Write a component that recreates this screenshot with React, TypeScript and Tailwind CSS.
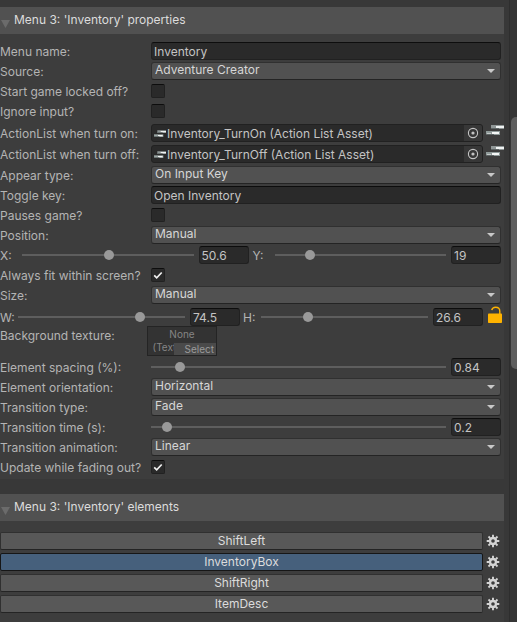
import { useId, type ReactNode } from 'react'

const FIELD =
  'h-[18px] min-w-0 rounded-[3px] border border-[#212121] border-t-[#0d0d0d] bg-[#2a2a2a] px-[2px] pt-px text-[#c4c4c4] outline-none focus:border-[#3a79bb]'

const ELEMENTS = ['ShiftLeft', 'InventoryBox', 'ShiftRight', 'ItemDesc']

function ActionListIcon({ className }: { className?: string }) {
  return (
    <svg viewBox="0 0 18 11" className={className} aria-hidden="true">
      <path d="M5 0h13v4H5z" fill="#8f9696" />
      <path d="M10 1h8v2h-8z" fill="#f0f3f3" />
      <path d="M5 3h8v1H5z" fill="#5d6464" />
      <path d="M0 6h14v4H0z" fill="#8f9a99" />
      <path d="M6 7h7v2H6z" fill="#f4f6f6" />
      <path d="M1 8h4v1H1z" fill="#c4c9c9" />
      <path d="M0 9h8v1H0z" fill="#5d6464" />
    </svg>
  )
}

function GearIcon() {
  return (
    <svg viewBox="0 0 14 14" className="size-[14px]" fill="none" stroke="#d4d4d4" aria-hidden="true">
      <circle cx="7" cy="7" r="3" strokeWidth="2.400" />
      <path
        d="M7 0.700v2.500M7 10.800v2.500M0.700 7h2.500M10.800 7h2.500M2.500 2.500l1.800 1.800M9.700 9.700l1.800 1.800M11.500 2.500L9.700 4.300M4.300 9.700l-1.800 1.800"
        strokeWidth="1.900"
      />
    </svg>
  )
}

function LockIcon() {
  return (
    <svg viewBox="0 0 14 17" className="h-[17px] w-[14px]" aria-hidden="true">
      <path d="M3.700 4.200C4.200 2.200 5.600 1.200 7.600 1.200c2.600 0 4.200 1.600 4.200 4V8" fill="none" stroke="#ffb300" strokeWidth="1.400" />
      <rect x="0" y="7.500" width="14" height="9.500" rx="0.800" fill="#ffb300" />
    </svg>
  )
}

function Header({ title }: { title: string }) {
  return (
    <button type="button" aria-expanded="true" className="flex h-[27px] w-full items-center bg-[#515151] pb-px text-left text-[#dcdcdc]">
      <span className="w-[14px] pt-[8px] pl-px">
        <svg viewBox="0 0 9 8" className="h-[8px] w-[9px]" aria-hidden="true">
          <path d="M0 0h9L4.500 8z" fill="#6b6b6b" />
        </svg>
      </span>
      {title}
    </button>
  )
}

function Row({ label, children }: { label: string; children: (id: string) => ReactNode }) {
  const id = useId()
  return (
    <div className="flex h-[18px] items-center">
      <label htmlFor={id} className="w-[151px] shrink-0 pt-px whitespace-nowrap">{label}</label>
      {children(id)}
    </div>
  )
}

function TextRow({ label, value }: { label: string; value: string }) {
  return <Row label={label}>{(id) => <input id={id} type="text" defaultValue={value} className={`${FIELD} flex-1`} />}</Row>
}

function SelectRow({ label, value }: { label: string; value: string }) {
  return (
    <Row label={label}>
      {(id) => (
        <div className="relative flex-1">
          <select
            id={id}
            className="block h-[18px] w-full appearance-none rounded-[3px] border border-[#303030] border-b-[#242424] bg-[#515151] px-[3px] pb-[2px] leading-[14px] text-[#d6d6d6] outline-none"
          >
            <option>{value}</option>
          </select>
          <svg viewBox="0 0 8 4" className="pointer-events-none absolute top-[7px] right-[6px] h-[4px] w-[8px]" aria-hidden="true">
            <path d="M0 0h8L4 4z" fill="#c8c8c8" />
          </svg>
        </div>
      )}
    </Row>
  )
}

function CheckRow({ label, checked = false }: { label: string; checked?: boolean }) {
  return (
    <Row label={label}>
      {(id) => (
        <span className="relative size-[14px]">
          <input
            id={id}
            type="checkbox"
            defaultChecked={checked}
            className="peer block size-[14px] appearance-none rounded-[2px] border border-[#212121] border-t-[#0d0d0d] bg-[#2a2a2a]"
          />
          <svg viewBox="0 0 14 14" className="pointer-events-none absolute inset-0 hidden size-[14px] peer-checked:block" aria-hidden="true">
            <path d="M3.200 7.300l2.500 2.500 5-5.300" fill="none" stroke="#f0f0f0" strokeWidth="1.700" />
          </svg>
        </span>
      )}
    </Row>
  )
}

function SliderField({ id, name, value, max }: { id: string; name: string; value: number; max: number }) {
  return (
    <>
      <input
        id={id}
        type="range"
        min={0}
        max={max}
        step={0.01}
        defaultValue={value}
        className="h-[10px] min-w-0 flex-1 appearance-none bg-transparent [&::-webkit-slider-runnable-track]:h-[2px] [&::-webkit-slider-runnable-track]:bg-[#5e5e5e] [&::-webkit-slider-thumb]:-mt-[4px] [&::-webkit-slider-thumb]:size-[10px] [&::-webkit-slider-thumb]:appearance-none [&::-webkit-slider-thumb]:rounded-full [&::-webkit-slider-thumb]:bg-[#999999]"
      />
      <input type="text" aria-label={name} defaultValue={value} className={`${FIELD} ml-[5px] w-[50px]`} />
    </>
  )
}

function AxisSlider({ label, value, labelClass }: { label: string; value: number; labelClass: string }) {
  const id = useId()
  return (
    <div className="flex min-w-0 flex-1 items-center">
      <label htmlFor={id} className={`${labelClass} h-[18px] shrink-0 pt-px`}>{label}</label>
      <SliderField id={id} name={label} value={value} max={100} />
    </div>
  )
}

function AssetRow({ label, value }: { label: string; value: string }) {
  return (
    <Row label={label}>
      {(id) => (
        <>
          <div className="flex h-[18px] min-w-0 flex-1 overflow-hidden rounded-[3px] border border-[#212121] bg-[#2a2a2a]">
            <button id={id} type="button" className="flex min-w-0 flex-1 items-center gap-px pt-px pl-[2px] text-left whitespace-nowrap text-[#c4c4c4]">
              <ActionListIcon className="h-[8px] w-[12px]" />
              {value}
            </button>
            <button type="button" aria-label="Select asset" className="flex w-[18px] items-center justify-center bg-[#373737]">
              <svg viewBox="0 0 12 12" className="size-[12px]" aria-hidden="true">
                <circle cx="6" cy="6" r="4.600" fill="none" stroke="#c4c4c4" strokeWidth="1.100" />
                <circle cx="6" cy="6" r="1.600" fill="#c4c4c4" />
              </svg>
            </button>
          </div>
          <button type="button" aria-label="Edit ActionList" className="-mr-[3px] ml-[3px] flex h-[18px] w-[18px] items-start pt-px">
            <ActionListIcon className="h-[11px] w-[18px]" />
          </button>
        </>
      )}
    </Row>
  )
}

export default function App() {
  return (
    <div className="flex min-h-screen bg-[#383838] font-['Inter',sans-serif] text-[12px] leading-[18px] text-[#b4b4b4]">
      <main className="flex min-w-0 flex-1 flex-col pt-[7px] pr-[5px]">
        <section className="bg-[#3d3d3d] pb-[3px]">
          <Header title="Menu 3: 'Inventory' properties" />
          <div className="flex flex-col gap-[2px] pt-[8px] pr-[3px]">
            <TextRow label="Menu name:" value="Inventory" />
            <SelectRow label="Source:" value="Adventure Creator" />
            <CheckRow label="Start game locked off?" />
            <CheckRow label="Ignore input?" />
            <div className="flex flex-col gap-[3px] pt-[2px] pb-px">
              <AssetRow label="ActionList when turn on:" value="Inventory_TurnOn (Action List Asset)" />
              <AssetRow label="ActionList when turn off:" value="Inventory_TurnOff (Action List Asset)" />
            </div>
            <SelectRow label="Appear type:" value="On Input Key" />
            <TextRow label="Toggle key:" value="Open Inventory" />
            <CheckRow label="Pauses game?" />
            <SelectRow label="Position:" value="Manual" />
            <div className="flex gap-[4px]">
              <AxisSlider label="X:" value={50.6} labelClass="w-[22px]" />
              <AxisSlider label="Y:" value={19} labelClass="w-[22px]" />
            </div>
            <CheckRow label="Always fit within screen?" checked />
            <SelectRow label="Size:" value="Manual" />
            <div className="flex gap-[3px] pt-[2px]">
              <AxisSlider label="W:" value={74.5} labelClass="w-[18px]" />
              <AxisSlider label="H:" value={26.6} labelClass="w-[18px]" />
              <button type="button" aria-label="Unlock aspect ratio" className="-mt-[2px] -mr-px flex h-[18px] w-[16px] items-start justify-end">
                <LockIcon />
              </button>
            </div>
            <div className="-mt-[2px] flex h-[30px]">
              <span className="w-[147px] shrink-0 pt-px">Background texture:</span>
              <div className="relative h-[30px] w-[70px] overflow-hidden border border-[#242424] bg-[#333333] pt-px text-center text-[10px] leading-[13px] text-[#858585]">
                <div>None</div>
                <div>(Texture 2D)</div>
                <button type="button" className="absolute right-0 bottom-0 h-[12px] w-[42px] bg-[#4a4a4a] pr-[2px] text-right leading-[12px] text-[#9a9a9a]">
                  Select
                </button>
              </div>
            </div>
            <Row label="Element spacing (%):">{(id) => <SliderField id={id} name="Element spacing value" value={0.84} max={10} />}</Row>
            <SelectRow label="Element orientation:" value="Horizontal" />
            <SelectRow label="Transition type:" value="Fade" />
            <Row label="Transition time (s):">{(id) => <SliderField id={id} name="Transition time value" value={0.2} max={5} />}</Row>
            <SelectRow label="Transition animation:" value="Linear" />
            <CheckRow label="Update while fading out?" checked />
          </div>
        </section>

        <section className="mt-[15px] flex-1 bg-[#3d3d3d]">
          <Header title="Menu 3: 'Inventory' elements" />
          <ul className="flex flex-col gap-[3px] pt-[11px] pr-[3px]">
            {ELEMENTS.map((name) => (
              <li key={name} className="flex items-center gap-[3px]">
                <button
                  type="button"
                  aria-pressed={name === 'InventoryBox'}
                  className="h-[18px] flex-1 rounded-[2px] border border-[#303030] border-b-[#242424] bg-[#585858] leading-[16px] text-[#dcdcdc] aria-pressed:border-[#161616] aria-pressed:bg-[#46607c]"
                >
                  {name}
                </button>
                <button type="button" aria-label={`${name} options`} className="flex w-[15px] justify-start">
                  <GearIcon />
                </button>
              </li>
            ))}
          </ul>
        </section>
      </main>
      <aside className="flex w-[8px] flex-col border-l border-[#2e2e2e] bg-[#353535] pt-[117px] pl-px">
        <div className="h-[252px] rounded-l-[5px] bg-[#5e5e5e]" />
      </aside>
    </div>
  )
}
